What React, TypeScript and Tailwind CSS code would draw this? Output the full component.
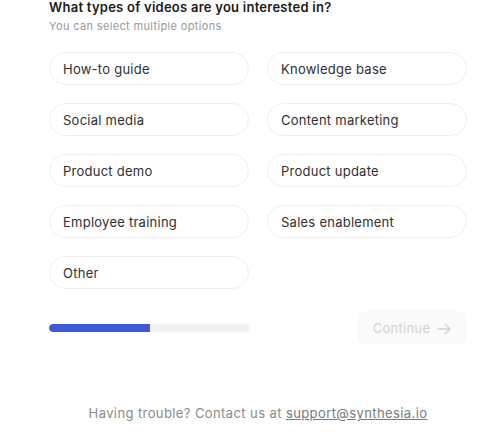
import React from "react";

const options = [
  "How-to guide",
  "Knowledge base",
  "Social media",
  "Content marketing",
  "Product demo",
  "Product update",
  "Employee training",
  "Sales enablement",
  "Other",
];

export default function App() {
  return (
    <div
      className="w-[478px] h-[432px] bg-white overflow-hidden"
      style={{ fontFamily: "Inter, 'Noto Sans', sans-serif" }}
    >
      <div className="w-[418px] ml-[49px] flex flex-col">
        <h1 className="text-[13px] leading-[15px] font-semibold text-[#1a1a1a] tracking-[0.25px]">
          What types of videos are you interested in?
        </h1>
        <p className="mt-[4px] text-[11px] leading-[14px] text-[#9a9a9a] tracking-[0.35px]">
          You can select multiple options
        </p>
        <div className="mt-[19px] grid grid-cols-[200px_200px] gap-x-[18px] gap-y-[18px]">
          {options.map((o) => (
            <button
              key={o}
              className="h-[33px] rounded-full border border-[#eeeeee] bg-white text-left pl-[13px] pt-[2px] text-[13px] text-[#303030] tracking-[0.25px]"
            >
              {o}
            </button>
          ))}
        </div>
        <div className="mt-[22px] flex items-center justify-between">
          <div className="w-[201px] h-[8px] rounded-full bg-[#f2f2f2] overflow-hidden">
            <div className="w-[101px] h-full rounded-l-full bg-[#4059db]" />
          </div>
          <button className="w-[110px] h-[33px] rounded-[8px] bg-[#fafafa] flex items-center justify-center gap-[7px] pt-[2px] text-[13px] text-[#d2d2d2] tracking-[0.3px]">
            Continue
            <svg width="14" height="12" viewBox="0 0 14 12" fill="none" stroke="#d2d2d2" strokeWidth="1.3" strokeLinecap="round" strokeLinejoin="round">
              <path d="M1 6h12M8 1l5 5-5 5" />
            </svg>
          </button>
        </div>
        <p className="mt-[60px] text-center text-[13px] text-[#8a8a8a] tracking-[0.4px]">
          Having trouble? Contact us at{" "}
          <a className="underline text-[#7a7a7a]">support@synthesia.io</a>
        </p>
      </div>
    </div>
  );
}
